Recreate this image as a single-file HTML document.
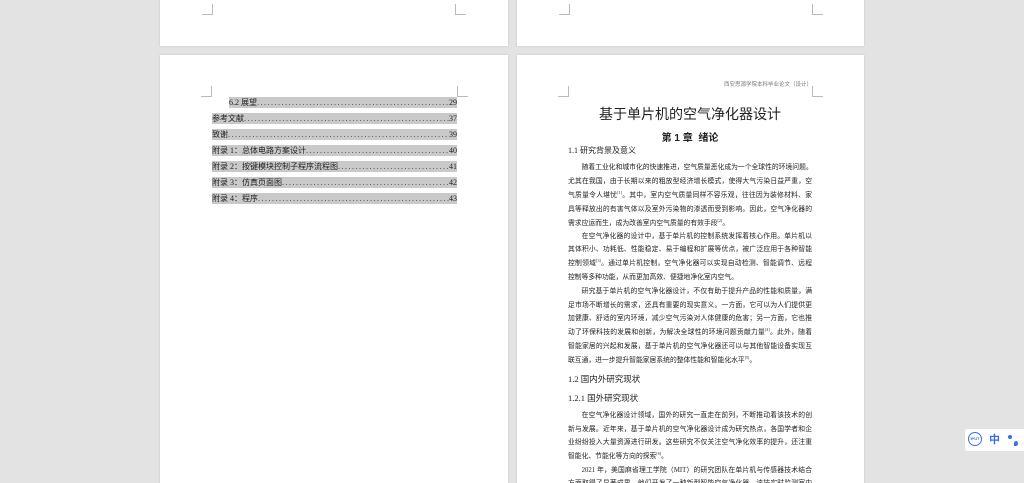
<!DOCTYPE html>
<html><head><meta charset="utf-8"><style>
*{margin:0;padding:0;box-sizing:border-box}
html,body{width:1024px;height:483px;overflow:hidden}
body{background:#e3e3e3;position:relative;font-family:"Liberation Serif","Noto Serif CJK SC","Noto Sans CJK SC",serif;color:#222}
.pg{position:absolute;background:#fff;box-shadow:0 0 2px rgba(0,0,0,.15)}
.c{position:absolute;width:11px;height:11px;border-color:#bbb;border-style:solid;border-width:0}
.tl{border-right-width:1px;border-bottom-width:1px}
.tr{border-left-width:1px;border-bottom-width:1px}
.toc{position:absolute;left:212px;width:245px;height:11px;background:#c9c9c9;font-size:8px;line-height:11px;display:flex;font-family:"Liberation Serif","Noto Sans CJK SC",serif;color:#222}
.toc .d{flex:1;overflow:hidden;white-space:nowrap;letter-spacing:1.5px;color:#444}
.l{position:absolute;left:568px;width:244px;height:8px;font-size:6.8px;line-height:8px;white-space:nowrap;text-align:justify;text-align-last:justify;color:#222;font-family:"Liberation Serif","Noto Sans CJK SC",sans-serif}
.l sup{font-size:4px;line-height:0;vertical-align:3px}
.s{text-align-last:left}
.i{padding-left:13.6px}
h{position:absolute;font-family:"Liberation Sans","Noto Sans CJK SC",sans-serif;color:#222;white-space:nowrap}
</style></head><body>
<div class="pg" style="left:160px;top:0;width:348px;height:46px"></div>
<div class="pg" style="left:517px;top:0;width:347px;height:46px"></div>
<div class="pg" style="left:160px;top:55px;width:348px;height:440px"></div>
<div class="pg" style="left:517px;top:55px;width:347px;height:440px"></div>
<div class="c tl" style="left:202px;top:4px"></div>
<div class="c tr" style="left:455px;top:4px"></div>
<div class="c tl" style="left:559px;top:4px"></div>
<div class="c tr" style="left:812px;top:4px"></div>
<div class="c tl" style="left:201px;top:86px"></div>
<div class="c tr" style="left:457px;top:86px"></div>
<div class="c tl" style="left:558px;top:86px"></div>
<div class="c tr" style="left:812px;top:86px"></div>

<div class="toc" style="top:97px;left:229px;width:228px"><span>6.2 展望</span><span class="d">......................................................................................................................................</span><span>29</span></div>
<div class="toc" style="top:113px"><span>参考文献</span><span class="d">......................................................................................................................................</span><span>37</span></div>
<div class="toc" style="top:129px"><span>致谢</span><span class="d">......................................................................................................................................</span><span>39</span></div>
<div class="toc" style="top:145px"><span>附录 1：总体电路方案设计</span><span class="d">......................................................................................................................................</span><span>40</span></div>
<div class="toc" style="top:161px"><span>附录 2：按键模块控制子程序流程图</span><span class="d">......................................................................................................................................</span><span>41</span></div>
<div class="toc" style="top:177px"><span>附录 3：仿真页面图</span><span class="d">......................................................................................................................................</span><span>42</span></div>
<div class="toc" style="top:193px"><span>附录 4：程序</span><span class="d">......................................................................................................................................</span><span>43</span></div>

<div style="position:absolute;left:700px;top:80px;width:112px;text-align:right;font-size:5.5px;color:#777;font-family:'Liberation Sans','Noto Sans CJK SC',sans-serif">西安思源学院本科毕业论文（设计）</div>
<h style="left:560px;width:260px;text-align:center;top:104px;font-size:14px">基于单片机的空气净化器设计</h>
<h style="left:560px;width:260px;text-align:center;top:129px;font-size:10px;font-weight:bold">第 1 章&nbsp; 绪论</h>
<h style="left:568px;top:145px;font-size:8px;font-family:'Liberation Serif','Noto Sans CJK SC',serif">1.1 研究背景及意义</h>
<div class="l i" style="top:164px">随着工业化和城市化的快速推进，空气质量恶化成为一个全球性的环境问题。</div>
<div class="l" style="top:178px">尤其在我国，由于长期以来的粗放型经济增长模式，使得大气污染日益严重，空</div>
<div class="l" style="top:192px">气质量令人堪忧<sup>[1]</sup>。其中，室内空气质量同样不容乐观，往往因为装修材料、家</div>
<div class="l" style="top:206px">具等释放出的有害气体以及室外污染物的渗透而受到影响。因此，空气净化器的</div>
<div class="l s" style="top:220px">需求应运而生，成为改善室内空气质量的有效手段<sup>[2]</sup>。</div>
<div class="l i" style="top:233px">在空气净化器的设计中，基于单片机的控制系统发挥着核心作用。单片机以</div>
<div class="l" style="top:246px">其体积小、功耗低、性能稳定、易于编程和扩展等优点，被广泛应用于各种智能</div>
<div class="l" style="top:260px">控制领域<sup>[3]</sup>。通过单片机控制，空气净化器可以实现自动检测、智能调节、远程</div>
<div class="l s" style="top:274px">控制等多种功能，从而更加高效、便捷地净化室内空气。</div>
<div class="l i" style="top:288px">研究基于单片机的空气净化器设计，不仅有助于提升产品的性能和质量，满</div>
<div class="l" style="top:302px">足市场不断增长的需求，还具有重要的现实意义。一方面，它可以为人们提供更</div>
<div class="l" style="top:315px">加健康、舒适的室内环境，减少空气污染对人体健康的危害；另一方面，它也推</div>
<div class="l" style="top:329px">动了环保科技的发展和创新，为解决全球性的环境问题贡献力量<sup>[4]</sup>。此外，随着</div>
<div class="l" style="top:343px">智能家居的兴起和发展，基于单片机的空气净化器还可以与其他智能设备实现互</div>
<div class="l s" style="top:357px">联互通，进一步提升智能家居系统的整体性能和智能化水平<sup>[5]</sup>。</div>
<h style="left:568px;top:373px;font-size:8.5px;font-family:'Liberation Serif','Noto Sans CJK SC',serif">1.2 国内外研究现状</h>
<h style="left:568px;top:392px;font-size:8.5px;font-family:'Liberation Serif','Noto Sans CJK SC',serif">1.2.1 国外研究现状</h>
<div class="l i" style="top:412px">在空气净化器设计领域，国外的研究一直走在前列，不断推动着该技术的创</div>
<div class="l" style="top:426px">新与发展。近年来，基于单片机的空气净化器设计成为研究热点，各国学者和企</div>
<div class="l" style="top:439px">业纷纷投入大量资源进行研发。这些研究不仅关注空气净化效率的提升，还注重</div>
<div class="l s" style="top:453px">智能化、节能化等方向的探索<sup>[6]</sup>。</div>
<div class="l i" style="top:467px">2021 年，美国麻省理工学院（MIT）的研究团队在单片机与传感器技术结合</div>
<div class="l" style="top:480px">方面取得了显著成果，他们开发了一种新型智能空气净化器，该技实时监测室内</div>

<div style="position:absolute;left:965px;top:429px;width:59px;height:22px;background:#fff;border-radius:3px 0 0 3px"></div>
<div style="position:absolute;left:968px;top:432px;width:14px;height:14px;border:1.5px solid #3d6ee8;border-radius:50%;font-size:4px;color:#3d6ee8;text-align:center;line-height:11px;font-family:'Liberation Sans',sans-serif;font-weight:bold">IPUT</div>
<div style="position:absolute;left:989px;top:431px;font-size:11px;color:#3d6ee8;font-weight:bold;font-family:'Noto Sans CJK SC',sans-serif">中</div>
<div style="position:absolute;left:1008px;top:435px;width:4px;height:4px;background:#3d6ee8;border-radius:50%"></div>
<div style="position:absolute;left:1014px;top:441px;width:4px;height:5px;background:#3d6ee8;border-radius:50% 50% 50% 0"></div>
</body></html>
